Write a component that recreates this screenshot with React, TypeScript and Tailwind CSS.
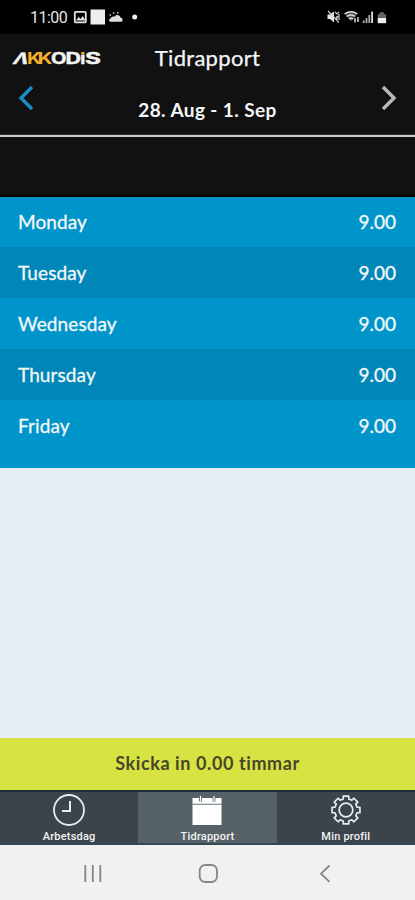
import React from "react";

interface DayRow {
    day: string;
    hours: string;
    row: string;
}

const days: DayRow[] = [
    { day: "Monday", hours: "9.00", row: "h-[50px] bg-[#0095ca]" },
    { day: "Tuesday", hours: "9.00", row: "h-[51px] bg-[#0086b8]" },
    { day: "Wednesday", hours: "9.00", row: "h-[51px] bg-[#0095ca]" },
    { day: "Thursday", hours: "9.00", row: "h-[51px] bg-[#0086b8]" },
    { day: "Friday", hours: "9.00", row: "h-[51px] bg-[#0095ca]" },
];

const StatusBar = () => (
    <div className="flex h-[34px] shrink-0 items-center justify-between bg-black pl-[30px] pr-[27px] font-['Roboto',sans-serif] text-[#e4e4e4]">
        <div className="flex items-center">
            <span className="w-[38px] whitespace-nowrap pt-[2px] text-[16px] leading-none tracking-[-0.5px]">11:00</span>
            <svg className="ml-[5px]" width="66" height="18" viewBox="73 8 66 18">
                <rect x="74.8" y="11.8" width="11" height="10.6" rx="1" fill="none" stroke="#e4e4e4" strokeWidth="1.8" />
                <path d="M76 20.5l2.6-3.4 2 2 2.2-3 2.6 4.4z" fill="#e4e4e4" />
                <rect x="90.5" y="9.5" width="14.5" height="15" fill="#eee" />
                <path d="M110 21.8h10.5a2 2 0 0 0 .2-4 3.4 3.4 0 0 0-6.4-1 2.6 2.6 0 0 0-3.6 1.8 1.7 1.7 0 0 0-.7 3.2z" fill="#ddd" />
                <path d="M111 15.5l-1.5-1M114 13.8l-.6-1.6M117.5 13.6l.8-1.5" stroke="#ddd" strokeWidth="1.2" />
                <circle cx="134.7" cy="17" r="2.5" fill="#eee" />
            </svg>
        </div>
        <svg width="62" height="16" viewBox="326 9 62 16">
            <path d="M327.5 14.5h2.5l4-3v11l-4-3.5h-2.5z" fill="#e4e4e4" />
            <path d="M328 11l11 11.5M335 12l2 2 2-2M336 18l2-2M337 21v-5M339 14v6" fill="none" stroke="#d0d0d0" strokeWidth="1.2" />
            <path d="M344.5 13.5q6.5-4 13 0l-6.5 8z" fill="#555" />
            <path d="M344.5 14q6.5-4.5 13 0M346.7 16.5q4.3-3 8.6 0M349 19q2-1.5 4 0" fill="none" stroke="#ddd" strokeWidth="1.4" />
            <path d="M355 18v4.5M358 22v-5" stroke="#ddd" strokeWidth="1.4" />
            <path d="M363.7 23v-2.5M366.5 23v-5M369.3 23v-8" stroke="#aaa" strokeWidth="1.8" />
            <path d="M372.1 23V11.5" stroke="#ddd" strokeWidth="1.8" />
            <path d="M377.7 14.2h2v-2h4.2v2h2.2v3.8h-8.4z" fill="#666" />
            <path d="M377.7 18h8.4v5.2h-8.4z" fill="#eee" />
        </svg>
    </div>
);

const Logo = () => (
    <svg
        className="absolute left-[12px] top-[14px]"
        width="92"
        height="20"
        viewBox="12 48 92 20"
        fontFamily="Inter, sans-serif"
        fontWeight="700"
        fontSize="15.5"
        fill="#f4f4f4"
    >
        <g stroke="#f4f4f4" strokeWidth="0.4">
            <text x="0" y="0" transform="translate(12 63.7) skewX(-18)" textLength="15" lengthAdjust="spacingAndGlyphs">Λ</text>
            <text x="51" y="63.7" textLength="15.5" lengthAdjust="spacingAndGlyphs">O</text>
            <text x="65.5" y="63.7" textLength="15.5" lengthAdjust="spacingAndGlyphs">D</text>
            <text x="80.3" y="63.7" textLength="5" lengthAdjust="spacingAndGlyphs">ı</text>
            <text x="85" y="63.7" textLength="16" lengthAdjust="spacingAndGlyphs">S</text>
        </g>
        <g fill="#f5b02c">
            <text x="27" y="63.7" textLength="14" lengthAdjust="spacingAndGlyphs">K</text>
            <text x="37.5" y="63.7" textLength="15" lengthAdjust="spacingAndGlyphs">K</text>
            <rect x="81.3" y="52" width="3.2" height="2.6" />
        </g>
    </svg>
);

const Header = () => (
    <header className="shrink-0 bg-[#111]">
        <div className="relative flex h-[48px] items-center justify-center">
            <Logo />
            <h1 className="text-[22px] font-normal leading-none tracking-[0.3px] [-webkit-text-stroke:0.25px]">Tidrapport</h1>
        </div>
        <div className="flex h-[53px] items-start justify-between border-b border-[#333] px-[18px]">
            <svg className="mt-[3px]" width="17" height="26" viewBox="0 0 17 26" fill="none">
                <path d="M14 2L3 13l11 11" stroke="#168fc4" strokeWidth="3.4" />
            </svg>
            <span className="mt-[18px] text-[19px] font-bold leading-none tracking-[0.4px]">28. Aug - 1. Sep</span>
            <svg className="mt-[3px]" width="17" height="26" viewBox="0 0 17 26" fill="none">
                <path d="M3 2l11 11L3 24" stroke="#b9b9b9" strokeWidth="3.4" />
            </svg>
        </div>
        <div className="h-[2px] bg-[#ccc]" />
        <div className="h-[60px] border-b-2 border-black" />
    </header>
);

// eight teeth, each one is four points around the centre
const gearPoints = Array.from({ length: 8 }, (_, i) =>
    [
        [-14, 11.4],
        [-11, 14.2],
        [11, 14.2],
        [14, 11.4],
    ]
        .map(([offset, radius]) => {
            const angle = ((i * 45 + offset) * Math.PI) / 180;
            return `${(17 + radius * Math.sin(angle)).toFixed(2)},${(17 - radius * Math.cos(angle)).toFixed(2)}`;
        })
        .join(" ")
).join(" ");

const TabBar = () => (
    <nav className="grid h-[55px] shrink-0 grid-cols-3 border-y-2 border-t-[#1d3040] border-b-[#344852] bg-[#3a444a] font-['Roboto',sans-serif] text-[11px] font-medium leading-none text-[#f2f2f2]">
        <div className="flex flex-col items-center pt-[1px]">
            <svg width="34" height="34" viewBox="0 0 34 34" fill="none" stroke="#e6edef">
                <circle cx="17" cy="17" r="15" strokeWidth="1.8" />
                <path d="M18 8v10h-8" strokeWidth="2" />
            </svg>
            <span className="mt-[4px] tracking-[0.2px]">Arbetsdag</span>
        </div>
        <div className="flex flex-col items-center bg-[#576268] pt-[1px]">
            <svg width="34" height="34" viewBox="0 0 34 34">
                <path d="M2.5 5h29v27h-29z" fill="#fff" />
                <path d="M2.5 11.3h29" stroke="#7e898e" strokeWidth="1.2" />
                <path d="M10.5 5v3.5M24 5v3.5" stroke="#576268" strokeWidth="2.8" />
                <path d="M10.5 3v5M24 3v5" stroke="#fff" strokeWidth="1.2" />
            </svg>
            <span className="mt-[4px] tracking-[0.2px]">Tidrapport</span>
        </div>
        <div className="flex flex-col items-center pt-[1px]">
            <svg width="34" height="34" viewBox="0 0 34 34" fill="none" stroke="#e6edef" strokeWidth="1.7">
                <circle cx="17" cy="17" r="6.8" />
                <polygon points={gearPoints} strokeLinejoin="round" />
            </svg>
            <span className="mt-[4px] tracking-[0.2px]">Min profil</span>
        </div>
    </nav>
);

const SystemNav = () => (
    <div className="h-[55px] shrink-0 bg-[#f1f1f1]">
        <svg width="415" height="55" viewBox="0 845 415 55" fill="none" stroke="#858585" strokeWidth="1.8">
            <path d="M85.3 865v17M92.8 865v17M100.3 865v17" />
            <rect x="199.7" y="865" width="17.3" height="17" rx="5.5" />
            <path d="M329.5 865.5l-8.5 8.2 8.5 8.2" />
        </svg>
    </div>
);

const App = () => {
    return (
        <div className="flex h-[900px] w-[415px] flex-col overflow-hidden bg-[#e6edf5] font-['Lato','Noto_Sans',sans-serif] text-[#f4f7f8]">
            <StatusBar />
            <Header />
            <main className="flex flex-1 flex-col">
                <div className="bg-[#0095ca] pb-[17px]">
                    {days.map((item) => (
                        <div
                            key={item.day}
                            className={`flex items-center justify-between pb-[1px] pl-[18px] pr-[19px] text-[19px] leading-none [-webkit-text-stroke:0.3px] ${item.row}`}
                        >
                            <span className="tracking-[0.1px]">{item.day}</span>
                            <span>{item.hours}</span>
                        </div>
                    ))}
                </div>
            </main>
            <button className="h-[52px] shrink-0 bg-[#d6e342] pb-[2px] text-[18px] font-bold leading-none tracking-[0.6px] text-[#46462d]">
                Skicka in 0.00 timmar
            </button>
            <TabBar />
            <SystemNav />
        </div>
    );
};

export default App;
